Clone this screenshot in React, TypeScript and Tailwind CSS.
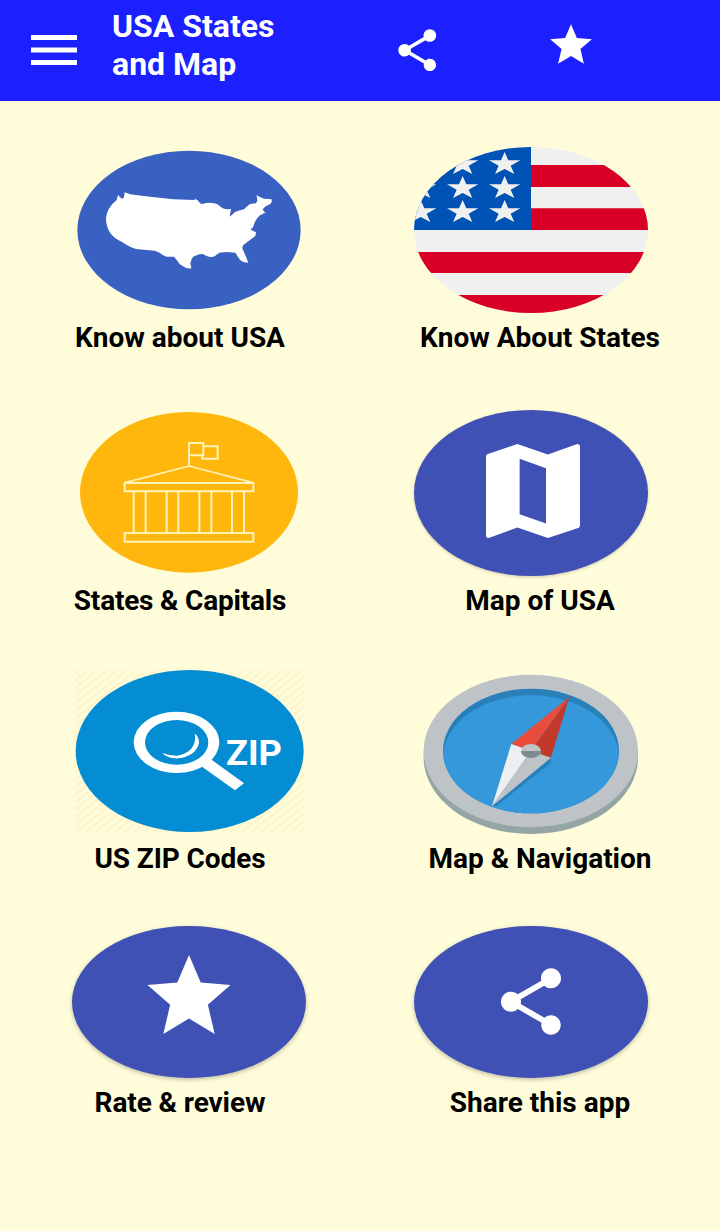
import React from "react";

const SHARE_PATH =
  "M18 16.08c-.76 0-1.44.3-1.96.77L8.91 12.7c.05-.23.09-.46.09-.7s-.04-.47-.09-.7l7.05-4.11c.54.5 1.25.81 2.04.81 1.66 0 3-1.34 3-3s-1.34-3-3-3-3 1.34-3 3c0 .24.04.47.09.7L8.04 9.81C7.5 9.31 6.79 9 6 9c-1.66 0-3 1.34-3 3s1.34 3 3 3c.79 0 1.5-.31 2.04-.81l7.12 4.16c-.05.21-.08.43-.08.65 0 1.61 1.31 2.92 2.92 2.92s2.92-1.31 2.92-2.92-1.31-2.92-2.92-2.92z";

const STAR_PATH =
  "M12 17.27L18.18 21l-1.64-7.03L22 9.24l-7.19-.61L12 2 9.19 8.63 2 9.24l5.46 4.73L5.82 21z";

type ArtProps = {
  viewBox: string;
  children: React.ReactNode;
};

const Art: React.FC<ArtProps> = ({ viewBox, children }) => (
  <svg viewBox={viewBox} className="block h-[170px] w-[240px] overflow-visible">
    {children}
  </svg>
);

const UsaArt = () => (
  <Art viewBox="27 15 720 510">
    <ellipse cx="387" cy="270" rx="335" ry="238" fill="#3961c2" />
    <path
      transform="translate(120 120)"
      fill="#fff"
      d="M54 45L66 57 72 52 74 37 90 43 150 50 220 58 282 60 287 57 295 63 300 70 307 72Q318 68 330 68 344 68 352 73L360 79 368 85 380 88 393 87 391 98 389 110 396 104Q405 94 415 92L432 88 440 80 450 72 468 70 472 62 470 45 478 50 492 56 515 58 515 66 511 72 497 79 488 88 492 95 498 97 480 106Q470 114 465 125L458 144 451 147 458 152 468 157 466 168 450 180 430 195Q426 201 428 208L437 228 445 248 430 246Q418 240 412 228L406 218 380 216 358 218 345 228Q335 234 322 229L308 222Q298 222 290 226 276 230 274 240L271 250 274 265Q262 268 248 258 236 252 232 242L222 230 200 230Q188 226 180 219L165 212 115 208Q92 204 65 185 42 175 30 158 18 140 18 115 20 84 50 60z"
    />
  </Art>
);

const flagStars = [
  [188, 70],
  [314, 70],
  [62, 142],
  [188, 142],
  [314, 142],
  [62, 214],
  [188, 214],
  [314, 214],
];

const FlagArt = () => (
  <Art viewBox="33 15 720 510">
    <clipPath id="flag">
      <ellipse cx="393" cy="270" rx="351" ry="249" />
    </clipPath>
    <g clipPath="url(#flag)">
      <rect x="40" y="20" width="710" height="500" fill="#f0f0f0" />
      <path
        fill="#d80027"
        d="M393 75h360v66H393zM393 205h360v65H393zM40 336h713v63H40zM40 465h713v60H40z"
      />
      <path fill="#0052b4" d="M40 20h353v250H40z" />
      {flagStars.map(([x, y], index) => (
        <path
          key={index}
          transform={`translate(${x} ${y})`}
          fill="#f0f0f0"
          d="M0-34L11-9H47L18 7 29 32 0 17-29 32-18 7-47-9H-11z"
        />
      ))}
    </g>
  </Art>
);

const CapitolArt = () => (
  <Art viewBox="27 24 720 510">
    <ellipse cx="387" cy="277" rx="327" ry="241" fill="#ffb60d" />
    <g fill="none" stroke="#fff3b8" strokeWidth="6">
      <path d="M387 198V129H430V166H387M430 139H473V176H427V166" />
      <path d="M195 248L387 198 579 248" strokeWidth="5" />
      <path d="M194 249H580V274H194zM194 399H580V425H194z" />
      <path d="M221 274V399M257 274V399M320 274V399M355 274V399M418 274V399M454 274V399M516 274V399M552 274V399" />
    </g>
  </Art>
);

const MapArt = () => (
  <Art viewBox="33 24 720 510">
    <ellipse
      cx="393"
      cy="279"
      rx="351"
      ry="249"
      fill="#3f51b5"
      className="drop-shadow-[0_3px_5px_rgba(0,0,0,0.2)]"
    />
    <path
      transform="translate(211 85) scale(15.67)"
      fill="#fff"
      d="M20.5 3l-.16.03L14.85 5 9 3 3.36 4.9c-.21.07-.36.25-.36.48V20.5c0 .28.22.5.5.5l.16-.03L9 19l5.85 2 5.79-1.9c.21-.07.36-.25.36-.48V3.5c0-.28-.22-.5-.5-.5zM14.49 18.2l-5.05-1.74V5.8l5.05 1.86z"
    />
  </Art>
);

const ZipArt = () => (
  <Art viewBox="27 18 720 510">
    <pattern
      id="stripes"
      width="18"
      height="18"
      patternUnits="userSpaceOnUse"
      patternTransform="rotate(-38)"
    >
      <rect width="18" height="8" fill="#fdf5cd" />
    </pattern>
    <rect x="44" y="30" width="688" height="486" fill="url(#stripes)" />
    <ellipse cx="389" cy="273" rx="342" ry="243" fill="#048dd2" />
    <path
      fill="#fff"
      fillRule="evenodd"
      d="M221 247A128.500 92 0 0 1 478 247 128.500 92 0 0 1 221 247zM255 247A95 67 0 0 0 445 247 95 67 0 0 0 255 247z"
    />
    <path fill="#fff" d="M424 319L453 298 552 370 525 391z" />
    <path
      fill="#fff"
      d="M404 221C412 225 417 236 417 246 414 278 378 297 345 295 328 293 314 288 307 279 321 284 336 287 351 287 387 281 411 258 404 221z"
    />
    <text
      x="498"
      y="314"
      fill="#fff"
      fontSize="107"
      textLength="168"
      lengthAdjust="spacingAndGlyphs"
      className="font-bold"
    >
      ZIP
    </text>
  </Art>
);

const CompassArt = () => (
  <Art viewBox="33 18 720 510">
    <clipPath id="dial">
      <ellipse cx="393" cy="273" rx="264" ry="187" />
    </clipPath>
    <path d="M71 273V293A321.500 229 0 0 0 714 293V273z" fill="#95a5a5" />
    <ellipse cx="392.5" cy="273" rx="321.5" ry="229" fill="#bdc3c7" />
    <ellipse cx="393" cy="273" rx="264" ry="187" fill="#2980b9" />
    <ellipse
      cx="393"
      cy="293"
      rx="264"
      ry="187"
      fill="#3498db"
      clipPath="url(#dial)"
    />
    <path fill="#2980b9" d="M276 439L453 293V308L290 437z" />
    <path fill="#e74c3c" d="M508 111L334 252 393 273z" />
    <path fill="#c0392b" d="M508 111L393 273 453 293z" />
    <path fill="#ecf0f1" d="M334 252L276 439 393 273z" />
    <path fill="#bdc3c7" d="M276 439L453 293 393 273z" />
    <ellipse cx="393" cy="273" rx="30" ry="21" fill="#bdc3c7" />
    <path fill="#7f8c8d" d="M363 273A30 21 0 0 0 423 273z" />
  </Art>
);

const RateArt = () => (
  <Art viewBox="27 -15 720 510">
    <ellipse
      cx="387"
      cy="261"
      rx="351"
      ry="228"
      fill="#3f51b5"
      className="drop-shadow-[0_5px_6px_rgba(0,0,0,0.25)]"
    />
    <path transform="translate(237.5 95) scale(12.46)" fill="#fff" d={STAR_PATH} />
  </Art>
);

const ShareArt = () => (
  <Art viewBox="33 -15 720 510">
    <ellipse
      cx="393"
      cy="261"
      rx="351"
      ry="228"
      fill="#3f51b5"
      className="drop-shadow-[0_5px_6px_rgba(0,0,0,0.25)]"
    />
    <path transform="translate(273 140) scale(10)" fill="#fff" d={SHARE_PATH} />
  </Art>
);

const rows = [
  {
    className: "mb-[49px]",
    left: { label: "Know about USA", art: <UsaArt />, tracking: "" },
    right: { label: "Know About States", art: <FlagArt />, tracking: "" },
  },
  {
    className: "mb-11",
    left: {
      label: "States & Capitals",
      art: <CapitolArt />,
      tracking: "tracking-[-0.2px]",
    },
    right: { label: "Map of USA", art: <MapArt />, tracking: "" },
  },
  {
    className: "mb-[30px]",
    left: {
      label: "US ZIP Codes",
      art: <ZipArt />,
      tracking: "tracking-[-0.1px]",
    },
    right: { label: "Map & Navigation", art: <CompassArt />, tracking: "" },
  },
  {
    className: "",
    left: {
      label: "Rate & review",
      art: <RateArt />,
      tracking: "tracking-[-0.1px]",
    },
    right: { label: "Share this app", art: <ShareArt />, tracking: "" },
  },
];

const App: React.FC = () => {
  return (
    <div className="min-h-screen bg-[#fffcd9] font-['Roboto',sans-serif]">
      {/* App bar */}
      <header className="flex h-[101px] items-start bg-[#1c20ff] text-white">
        <button className="mt-[35px] ml-[31px]">
          <svg viewBox="0 0 46 30" className="block h-[30px] w-[46px]" fill="currentColor">
            <path d="M0 0h46v5H0zM0 12.5h46v5H0zM0 25h46v5H0z" />
          </svg>
        </button>
        <h1 className="mt-[7px] ml-[35px] w-[280px] text-[32px] leading-[38px] font-bold">
          USA States
          <br />
          and Map
        </h1>
        <button className="mt-[24.5px]">
          <svg viewBox="0 0 24 24" className="block size-[50.5px]" fill="currentColor">
            <path d={SHARE_PATH} />
          </svg>
        </button>
        <button className="mt-5 ml-[103px]">
          <svg viewBox="0 0 24 24" className="block size-[50px]" fill="currentColor">
            <path d={STAR_PATH} />
          </svg>
        </button>
      </header>

      {/* Menu */}
      <main className="pt-11">
        {rows.map((row, index) => (
          <div key={index} className={`grid grid-cols-2 ${row.className}`}>
            {[row.left, row.right].map((item, side) => (
              <div key={item.label} className="flex flex-col items-center">
                <div className={side === 0 ? "pl-[18px]" : "pr-[18px]"}>
                  {item.art}
                </div>
                <p
                  className={`pt-px text-[28px] leading-[43px] font-bold text-black ${item.tracking}`}
                >
                  {item.label}
                </p>
              </div>
            ))}
          </div>
        ))}
      </main>
    </div>
  );
};

export default App;
